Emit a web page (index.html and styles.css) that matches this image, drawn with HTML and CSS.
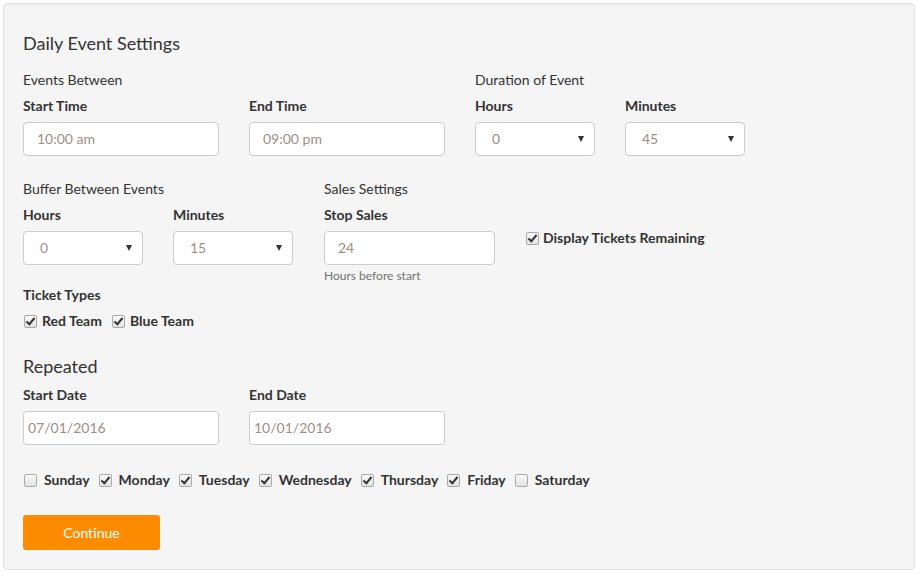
FILE: index.html
```html
<!DOCTYPE html>
<html>
<head>
<meta charset="utf-8">
<link rel="stylesheet" href="styles.css">
</head>
<body>
<div class="well">
  <h3 class="title">Daily Event Settings</h3>

  <div class="row row-first">
    <div class="group">
      <div class="group-title">Events Between</div>
      <div class="fields">
        <div class="field">
          <div class="label">Start Time</div>
          <div class="input w196"><span class="val">10:00 am</span></div>
        </div>
        <div class="field">
          <div class="label">End Time</div>
          <div class="input w196"><span class="val">09:00 pm</span></div>
        </div>
      </div>
    </div>
    <div class="group">
      <div class="group-title">Duration of Event</div>
      <div class="fields">
        <div class="field">
          <div class="label">Hours</div>
          <div class="select w120"><span class="val">0</span><span class="arrow"></span></div>
        </div>
        <div class="field">
          <div class="label">Minutes</div>
          <div class="select w120"><span class="val">45</span><span class="arrow"></span></div>
        </div>
      </div>
    </div>
  </div>

  <div class="row row-second">
    <div class="group">
      <div class="group-title">Buffer Between Events</div>
      <div class="fields">
        <div class="field">
          <div class="label">Hours</div>
          <div class="select w120"><span class="val">0</span><span class="arrow"></span></div>
        </div>
        <div class="field">
          <div class="label">Minutes</div>
          <div class="select w120"><span class="val">15</span><span class="arrow"></span></div>
        </div>
      </div>
    </div>
    <div class="group">
      <div class="group-title">Sales Settings</div>
      <div class="fields">
        <div class="field">
          <div class="label">Stop Sales</div>
          <div class="input w171"><span class="val v-num">24</span></div>
          <div class="help">Hours before start</div>
        </div>
        <div class="field field-check">
          <label class="check gap4"><span class="box on"></span>Display Tickets Remaining</label>
        </div>
      </div>
    </div>
  </div>

  <div class="tickets">
    <div class="label">Ticket Types</div>
    <div class="checks">
      <label class="check gap5"><span class="box on"></span>Red Team</label>
      <label class="check gap5"><span class="box on"></span>Blue Team</label>
    </div>
  </div>

  <h3 class="title title-repeated">Repeated</h3>
  <div class="fields">
    <div class="field">
      <div class="label">Start Date</div>
      <div class="input w196 date"><span class="val">07/01/2016</span></div>
    </div>
    <div class="field">
      <div class="label">End Date</div>
      <div class="input w196 date"><span class="val">10/01/2016</span></div>
    </div>
  </div>

  <div class="days">
    <label class="check gap7"><span class="box"></span>Sunday</label>
    <label class="check gap7"><span class="box on"></span>Monday</label>
    <label class="check gap7"><span class="box on"></span>Tuesday</label>
    <label class="check gap7"><span class="box on"></span>Wednesday</label>
    <label class="check gap7"><span class="box on"></span>Thursday</label>
    <label class="check gap7"><span class="box on"></span>Friday</label>
    <label class="check gap7"><span class="box"></span>Saturday</label>
  </div>

  <button class="btn">Continue</button>
</div>
</body>
</html>
```

FILE: styles.css
```css
* { box-sizing: border-box; }
html, body {
  margin: 0;
  padding: 0;
  background: #ffffff;
}
body {
  padding: 3px;
  font-family: Lato, "Open Sans", "Liberation Sans", sans-serif;
  font-size: 14px;
  line-height: 20px;
  color: #333333;
}
.well {
  width: 912px;
  height: 567px;
  background: #f5f5f5;
  border: 1px solid #e3e3e3;
  border-radius: 4px;
  box-shadow: inset 0 1px 1px rgba(0,0,0,0.05);
  padding: 19px;
}
.title {
  margin: 8px 0 0 0;
  font-size: 18px;
  line-height: 24px;
  font-weight: 400;
  color: #333;
}
.title-repeated {
  margin-top: 0;
}
.row {
  display: flex;
  gap: 30px;
}
.row-first { margin-top: 15px; }
.row-second { margin-top: 23px; gap: 31px; }
.group-title {
  font-size: 14px;
  line-height: 20px;
  margin-bottom: 6px;
}
.fields {
  display: flex;
  gap: 30px;
}
.field {
  display: flex;
  flex-direction: column;
}
.label {
  font-weight: 700;
  line-height: 20px;
  margin-bottom: 6px;
}
.input, .select {
  height: 34px;
  background: #fff;
  border: 1px solid #cccccc;
  border-radius: 4px;
  display: flex;
  align-items: center;
  color: #9d8f88;
  font-size: 14px;
}
.input { padding-left: 13px; }
.input.date { padding-left: 4px; }
.w196 { width: 196px; }
.w120 { width: 120px; }
.w171 { width: 171px; }
.select {
  padding-left: 16px;
  padding-right: 8px;
  justify-content: space-between;
}
.arrow {
  width: 0;
  height: 0;
  border-left: 3.5px solid transparent;
  border-right: 3.5px solid transparent;
  border-top: 6px solid #333;
  margin-right: 2px;
}
.help {
  font-size: 12px;
  line-height: 16px;
  color: #737373;
  margin-top: 3px;
}
.field-check {
  padding-top: 23px;
}
.check {
  display: flex;
  align-items: center;
  font-weight: 700;
  color: #333;
}
.gap4 .box { margin-right: 4px; }
.gap5 .box { margin-right: 5px; }
.gap7 .box { margin-right: 7px; }
.box {
  width: 13px;
  height: 13px;
  border: 1px solid #a9a9a9;
  border-radius: 2px;
  background: linear-gradient(#fafafa, #e2e2e2);
  position: relative;
  flex: none;
  margin-left: 1px;
}
.box.on::after {
  content: "";
  position: absolute;
  left: 3px;
  top: 0px;
  width: 3px;
  height: 7px;
  border-right: 2px solid #333;
  border-bottom: 2px solid #333;
  transform: rotate(40deg);
}
.tickets {
  margin-top: 1px;
}
.tickets .label { margin-bottom: 6px; }
.checks {
  display: flex;
  gap: 9px;
}
.tickets + .title-repeated { margin-top: 23px; }
.title-repeated + .fields { margin-top: 7px; }
.days {
  display: flex;
  gap: 8px;
  margin-top: 25px;
}
.btn {
  display: block;
  margin-top: 25px;
  width: 137px;
  height: 35px;
  border: none;
  border-radius: 3px;
  background: #ff8c00;
  color: #fff;
  font-family: Lato, "Open Sans", "Liberation Sans", sans-serif;
  font-size: 14px;
  padding: 0;
}
```
